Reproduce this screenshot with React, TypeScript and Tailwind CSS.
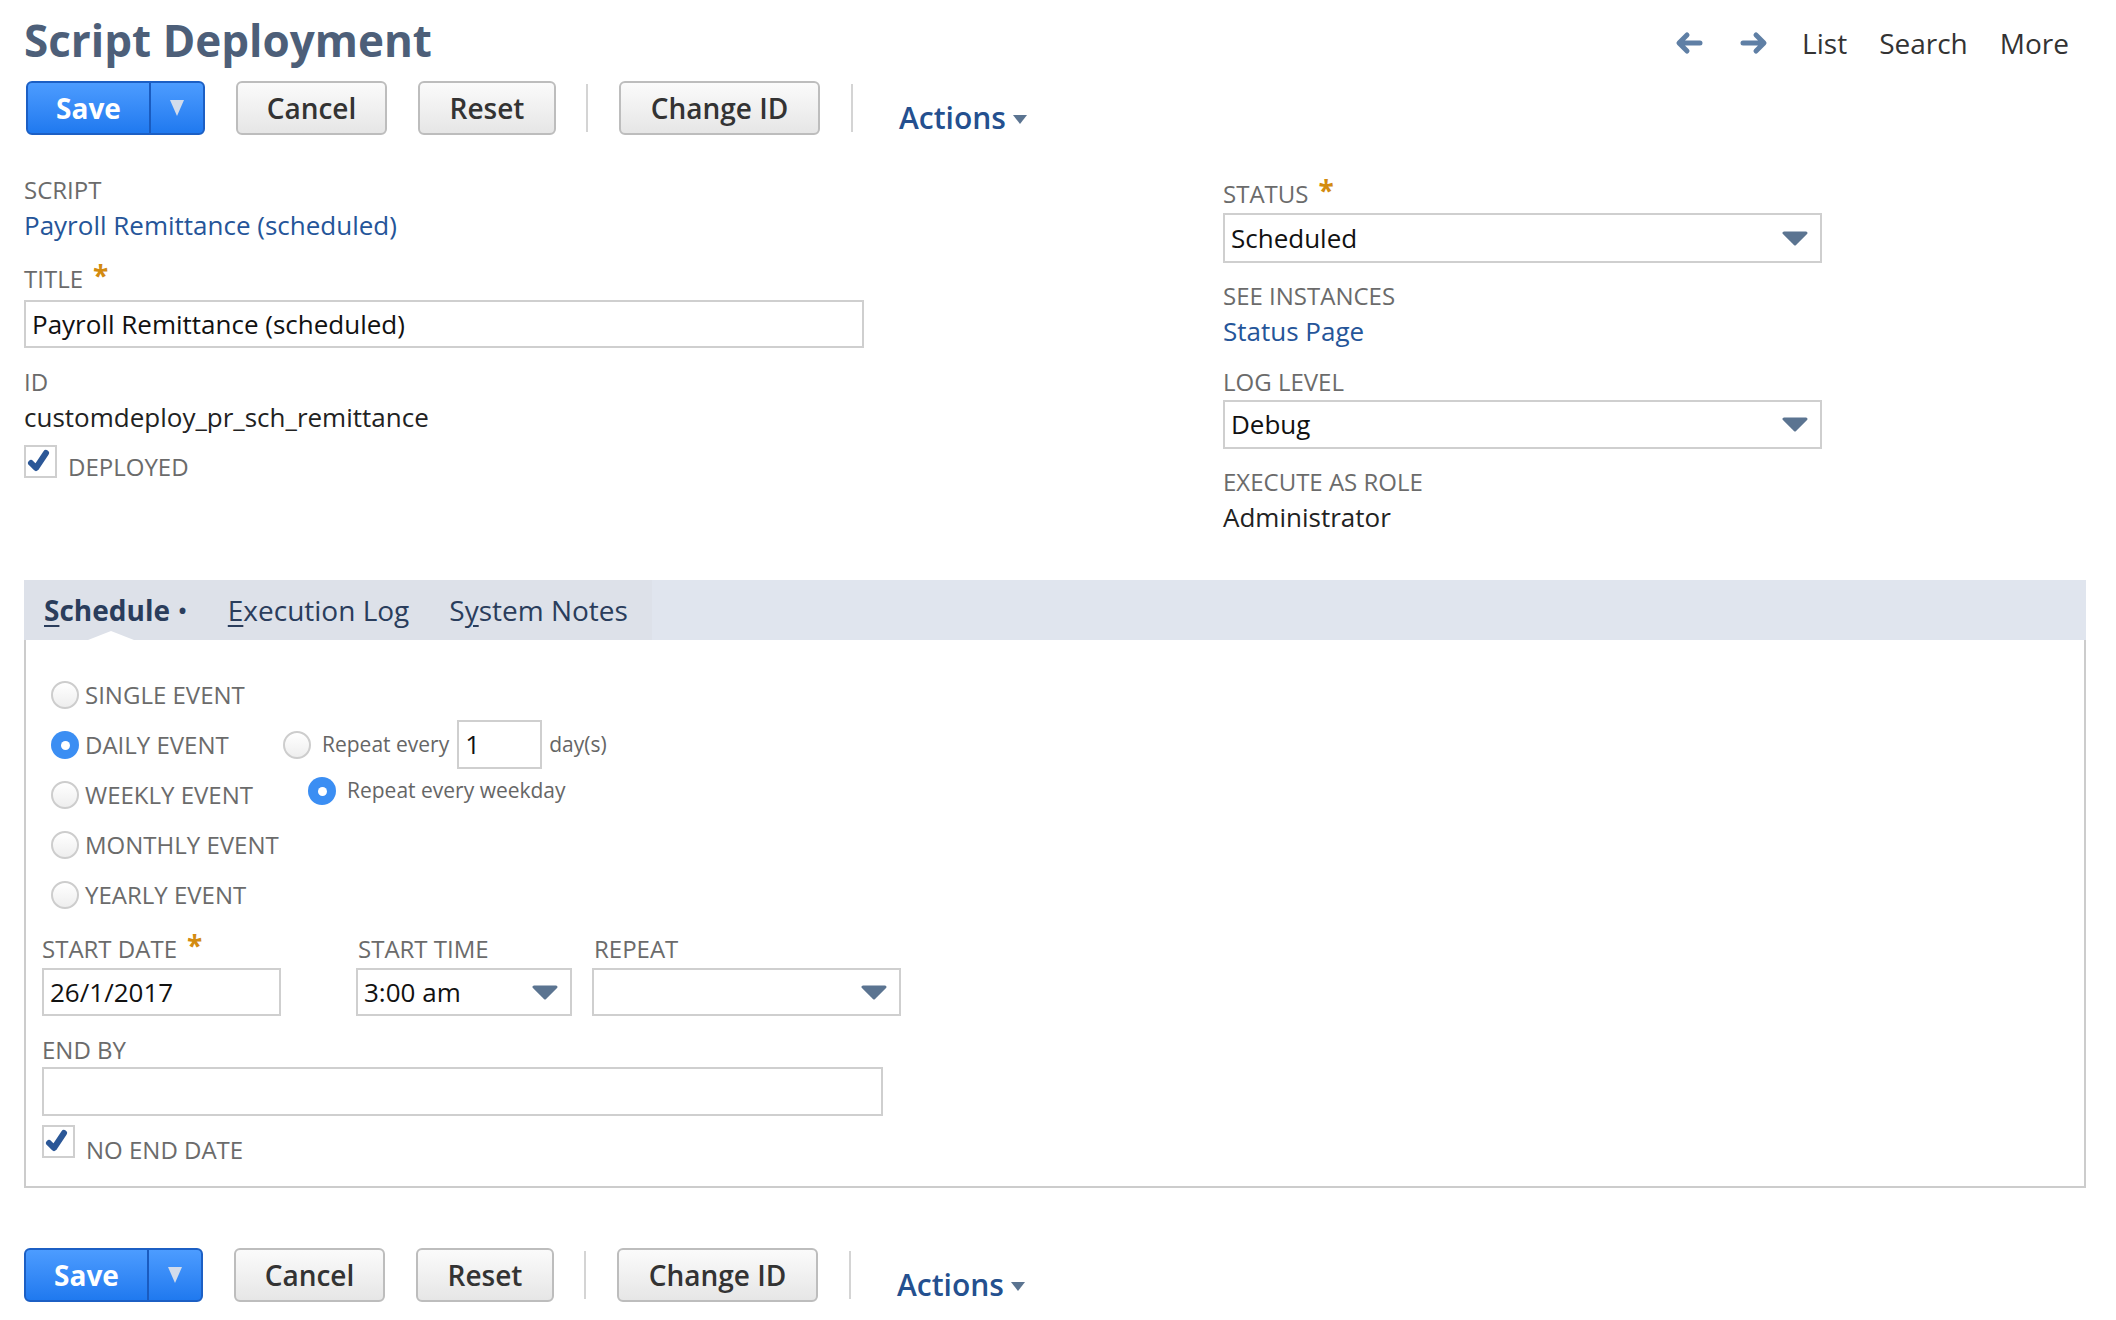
import React from "react";

const font = "font-['Open_Sans','Liberation_Sans',sans-serif]";
const label = "text-[24px] leading-[32px] text-[#6b6b6b] uppercase";
const value = "text-[26px] leading-[36px] text-[#222222]";
const link = "text-[26px] leading-[36px] text-[#255599]";

function Req() {
  return <span className="ml-[10px] text-[28px] leading-[20px] font-bold text-[#d38b10] relative top-[-4px]">*</span>;
}

function Caret({ className = "" }: { className?: string }) {
  return (
    <svg width="26" height="15" viewBox="0 0 26 15" className={className}>
      <path d="M2 2 H24 L13 13 Z" fill="#5b7491" stroke="#5b7491" strokeWidth="3" strokeLinejoin="round" />
    </svg>
  );
}

function Check() {
  return (
    <div className="w-[33px] h-[33px] border-2 border-[#cfcfcf] bg-white flex-none">
      <svg width="29" height="29" viewBox="0 0 29 29">
        <path d="M5 16 L10 21 L20 6" fill="none" stroke="#2b5797" strokeWidth="6" strokeLinecap="round" strokeLinejoin="round" />
      </svg>
    </div>
  );
}

function Radio({ on }: { on?: boolean }) {
  if (on)
    return (
      <div className="w-[28px] h-[28px] rounded-full bg-[#3b8ef3] flex items-center justify-center flex-none">
        <div className="w-[9px] h-[9px] rounded-full bg-white" />
      </div>
    );
  return <div className="w-[28px] h-[28px] rounded-full border-2 border-[#cdcdcd] bg-gradient-to-b from-white to-[#eeeeee] flex-none" />;
}

function Btn({ children, w }: { children: React.ReactNode; w: string }) {
  return (
    <div className={`${w} h-[54px] rounded-[6px] border-2 border-[#bdbdbd] bg-gradient-to-b from-[#fbfbfb] to-[#e6e6e6] flex items-center justify-center text-[28px] font-semibold text-[#333333]`}>
      {children}
    </div>
  );
}

function Sep() {
  return <div className="w-[2px] h-[48px] bg-[#d4d4d4]" />;
}

function ButtonBar() {
  return (
    <div className="flex items-center h-[54px]">
      <div className="ml-[2px] w-[179px] h-[54px] rounded-[6px] border-2 border-[#1c5fc4] bg-gradient-to-b from-[#4c9cff] to-[#1f79ef] flex">
        <div className="w-[123px] flex items-center justify-center text-[28px] font-bold text-white border-r-2 border-[#1a5bbf]">Save</div>
        <div className="flex-1 flex items-center justify-center">
          <svg width="16" height="18" viewBox="0 0 16 18">
            <path d="M1 1 H15 L8 17 Z" fill="#d3dceb" />
          </svg>
        </div>
      </div>
      <div className="ml-[31px]"><Btn w="w-[151px]">Cancel</Btn></div>
      <div className="ml-[31px]"><Btn w="w-[138px]">Reset</Btn></div>
      <div className="ml-[30px]"><Sep /></div>
      <div className="ml-[31px]"><Btn w="w-[201px]">Change ID</Btn></div>
      <div className="ml-[31px]"><Sep /></div>
      <div className="ml-[46px] mt-[18px] flex items-center text-[30px] font-semibold text-[#24508f]">
        Actions
        <svg width="14" height="9" viewBox="0 0 14 9" className="ml-[7px] mt-[4px]">
          <path d="M0 0 H14 L7 9 Z" fill="#5b7491" />
        </svg>
      </div>
    </div>
  );
}

function Select({ text, w, h = "h-[50px]" }: { text: string; w: string; h?: string }) {
  return (
    <div className={`${w} ${h} border-2 border-[#cfcfcf] bg-white flex items-center justify-between pl-[6px] pr-[12px]`}>
      <span className="text-[26px] text-[#111111]">{text}</span>
      <Caret />
    </div>
  );
}

function Input({ text, w, h = "h-[48px]" }: { text?: string; w: string; h?: string }) {
  return (
    <div className={`${w} ${h} border-2 border-[#cfcfcf] bg-white flex items-center pl-[6px] text-[26px] text-[#111111]`}>
      {text}
    </div>
  );
}

function Arrow({ dir }: { dir: "l" | "r" }) {
  return (
    <svg width="28" height="24" viewBox="0 0 28 24">
      {dir === "l" ? (
        <path d="M25 12 H5 M12 4 L4 12 L12 20" fill="none" stroke="#5f7fa5" strokeWidth="5" strokeLinecap="round" strokeLinejoin="round" />
      ) : (
        <path d="M3 12 H23 M16 4 L24 12 L16 20" fill="none" stroke="#5f7fa5" strokeWidth="5" strokeLinecap="round" strokeLinejoin="round" />
      )}
    </svg>
  );
}

export default function App() {
  return (
    <div className={`${font} w-[2116px] h-[1320px] bg-white pl-[24px] pr-[30px] overflow-hidden`}>
      {/* header */}
      <div className="flex justify-between items-start h-[81px]">
        <h1 className="mt-[12px] text-[44px] leading-[56px] font-bold text-[#4d5f79]">Script Deployment</h1>
        <div className="mt-[23px] flex items-center pr-[17px] text-[28px] leading-[40px] text-[#333333]">
          <Arrow dir="l" />
          <div className="ml-[37px]"><Arrow dir="r" /></div>
          <span className="ml-[34px]">List</span>
          <span className="ml-[32px]">Search</span>
          <span className="ml-[32px]">More</span>
        </div>
      </div>

      <ButtonBar />

      {/* main fields */}
      <div className="flex h-[400px]">
        <div className="w-[1199px] flex flex-col items-start">
          <div className={`${label} mt-[39px]`}>Script</div>
          <div className={`${link} mt-[1px]`}>Payroll Remittance (scheduled)</div>
          <div className={`${label} mt-[20px] flex items-center`}>Title<Req /></div>
          <div className="mt-[5px]"><Input w="w-[840px]" text="Payroll Remittance (scheduled)" /></div>
          <div className={`${label} mt-[18px]`}>ID</div>
          <div className={`${value} mt-[1px]`}>customdeploy_pr_sch_remittance</div>
          <div className="mt-[10px] flex items-start">
            <Check />
            <span className={`${label} ml-[11px] mt-[6px]`}>Deployed</span>
          </div>
        </div>
        <div className="flex flex-col items-start">
          <div className={`${label} mt-[43px] flex items-center`}>Status<Req /></div>
          <div className="mt-[3px]"><Select w="w-[599px]" text="Scheduled" /></div>
          <div className={`${label} mt-[17px]`}>See Instances</div>
          <div className={`${link} mt-[1px]`}>Status Page</div>
          <div className={`${label} mt-[17px]`}>Log Level</div>
          <div className="mt-[2px]"><Select w="w-[599px]" h="h-[49px]" text="Debug" /></div>
          <div className={`${label} mt-[17px]`}>Execute As Role</div>
          <div className={`${value} mt-[1px]`}>Administrator</div>
        </div>
      </div>

      {/* tabs */}
      <div className="mt-[45px]">
        <div className="h-[60px] flex bg-[#e0e5ee]">
          <div className="relative flex items-center h-full bg-[#dde1e9] pr-[4px] text-[28px] leading-[40px] text-[#2a3d5c]">
            <span className="px-[20px] font-bold">
              <span className="underline underline-offset-[4px] decoration-2">S</span>chedule <span className="font-normal">•</span>
            </span>
            <span className="px-[20px]">
              <span className="underline underline-offset-[4px] decoration-2">E</span>xecution Log
            </span>
            <span className="px-[20px]">
              S<span className="underline underline-offset-[4px] decoration-2">y</span>stem Notes
            </span>
            <div className="absolute left-[64px] bottom-0 w-0 h-0 border-l-[23px] border-r-[23px] border-b-[9px] border-l-transparent border-r-transparent border-b-white" />
          </div>
        </div>

        <div className="h-[548px] border-x-2 border-b-2 border-[#cccccc] pl-[25px] pt-[30px]">
          {/* event radios */}
          <div className="flex flex-col text-[24px] text-[#6b6b6b]">
            <div className="h-[50px] flex items-center">
              <Radio />
              <span className="ml-[6px]">SINGLE EVENT</span>
            </div>
            <div className="h-[50px] flex items-center">
              <div className="w-[232px] flex items-center">
                <Radio on />
                <span className="ml-[6px]">DAILY EVENT</span>
              </div>
              <Radio />
              <span className="ml-[11px] text-[21px] text-[#666666]">Repeat every</span>
              <div className="ml-[8px] mt-[-2px]"><Input w="w-[85px]" h="h-[49px]" text="1" /></div>
              <span className="ml-[7px] text-[21px] text-[#666666]">day(s)</span>
            </div>
            <div className="h-[50px] flex items-center">
              <div className="w-[257px] flex items-center">
                <Radio />
                <span className="ml-[6px]">WEEKLY EVENT</span>
              </div>
              <div className="flex items-center mt-[-8px]">
                <Radio on />
                <span className="ml-[11px] text-[21px] text-[#666666]">Repeat every weekday</span>
              </div>
            </div>
            <div className="h-[50px] flex items-center">
              <Radio />
              <span className="ml-[6px]">MONTHLY EVENT</span>
            </div>
            <div className="h-[50px] flex items-center">
              <Radio />
              <span className="ml-[6px]">YEARLY EVENT</span>
            </div>
          </div>

          {/* dates */}
          <div className="ml-[-9px] mt-[13px] flex items-start">
            <div className="flex flex-col">
              <div className={`${label} flex items-center`}>Start Date<Req /></div>
              <div className="mt-[3px]"><Input w="w-[239px]" text="26/1/2017" /></div>
            </div>
            <div className="ml-[75px] flex flex-col">
              <div className={`${label} pl-[2px]`}>Start Time</div>
              <div className="mt-[3px]"><Select w="w-[216px]" h="h-[48px]" text="3:00 am" /></div>
            </div>
            <div className="ml-[20px] flex flex-col">
              <div className={`${label} pl-[2px]`}>Repeat</div>
              <div className="mt-[3px]"><Select w="w-[309px]" h="h-[48px]" text="" /></div>
            </div>
          </div>
          <div className="ml-[-9px] flex flex-col items-start">
            <div className={`${label} mt-[18px]`}>End By</div>
            <div className="mt-[1px]"><Input w="w-[841px]" h="h-[49px]" /></div>
            <div className="mt-[9px] flex items-start">
              <Check />
              <span className={`${label} ml-[11px] mt-[9px]`}>No End Date</span>
            </div>
          </div>
        </div>
      </div>

      <div className="mt-[60px] ml-[-2px]">
        <ButtonBar />
      </div>
    </div>
  );
}
